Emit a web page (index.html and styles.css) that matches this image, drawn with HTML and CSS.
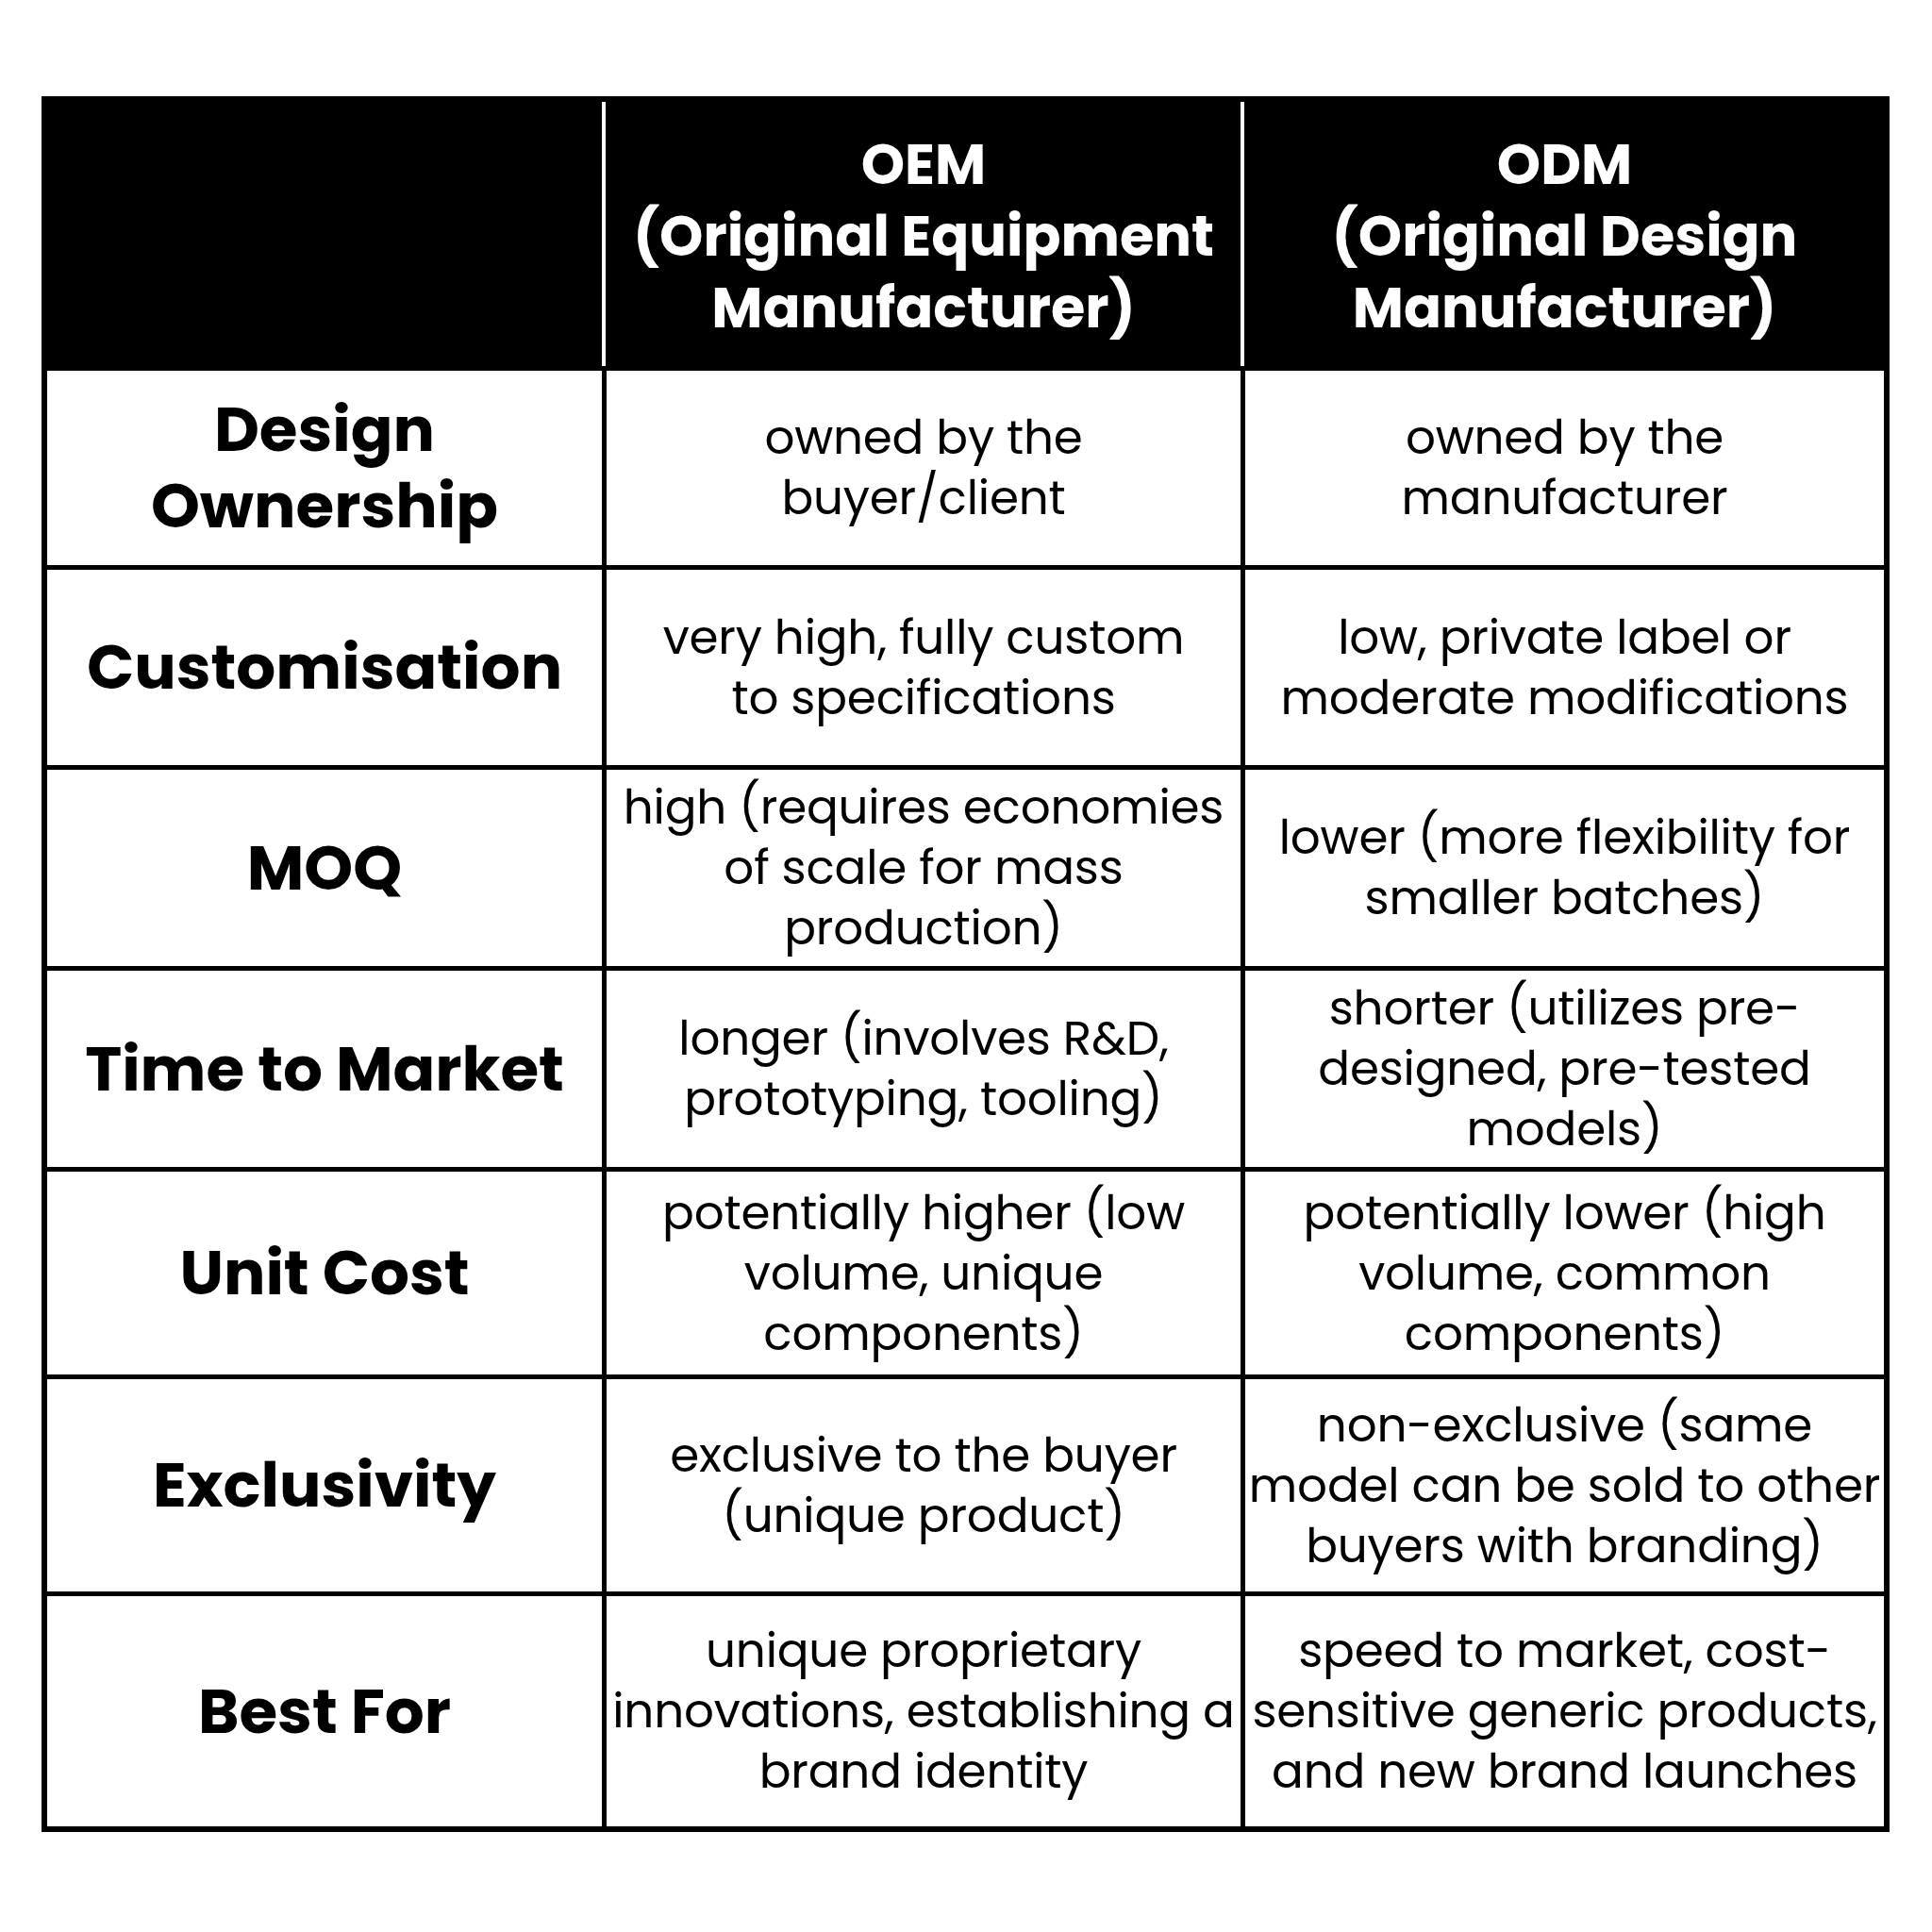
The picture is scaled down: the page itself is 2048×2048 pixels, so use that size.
FILE: index.html
```html
<!DOCTYPE html>
<html lang="en">
<head>
<meta charset="utf-8">
<title>OEM vs ODM</title>
<link rel="stylesheet" href="styles.css">
</head>
<body>
<main class="page">
  <div class="table">
    <div class="cell head corner"></div>
    <div class="cell head">OEM<br>(Original Equipment<br>Manufacturer)</div>
    <div class="cell head">ODM<br>(Original Design<br>Manufacturer)</div>

    <div class="cell label">Design<br>Ownership</div>
    <div class="cell">owned by the<br>buyer/client</div>
    <div class="cell">owned by the<br>manufacturer</div>

    <div class="cell label">Customisation</div>
    <div class="cell">very high, fully custom<br>to specifications</div>
    <div class="cell">low, private label or<br>moderate modifications</div>

    <div class="cell label">MOQ</div>
    <div class="cell">high (requires economies<br>of scale for mass<br>production)</div>
    <div class="cell">lower (more flexibility for<br>smaller batches)</div>

    <div class="cell label">Time to Market</div>
    <div class="cell">longer (involves R&amp;D,<br>prototyping, tooling)</div>
    <div class="cell">shorter (utilizes pre-<br>designed, pre-tested<br>models)</div>

    <div class="cell label">Unit Cost</div>
    <div class="cell">potentially higher (low<br>volume, unique<br>components)</div>
    <div class="cell">potentially lower (high<br>volume, common<br>components)</div>

    <div class="cell label">Exclusivity</div>
    <div class="cell">exclusive to the buyer<br>(unique product)</div>
    <div class="cell">non-exclusive (same<br>model can be sold to other<br>buyers with branding)</div>

    <div class="cell label">Best For</div>
    <div class="cell">unique proprietary<br>innovations, establishing a<br>brand identity</div>
    <div class="cell">speed to market, cost-<br>sensitive generic products,<br>and new brand launches</div>
  </div>
</main>
</body>
</html>
```

FILE: styles.css
```css
html, body {
  margin: 0;
  padding: 0;
  background: #ffffff;
}

.page {
  padding: 102px 0 0 44px;
}

.table {
  display: grid;
  grid-template-columns: 588px 672px 677px;
  grid-template-rows: 280px 206px 207px 208px 208px 215px 225px 244px;
  gap: 5px;
  padding: 6px;
  width: max-content;
  background: #000000;
  font-family: "Poppins", "Open Sans", "DejaVu Sans", sans-serif;
  color: #000000;
}

.cell {
  background: #ffffff;
  display: flex;
  align-items: center;
  justify-content: center;
  text-align: center;
  font-size: 50px;
  line-height: 64px;
  font-weight: 400;
  letter-spacing: -0.2px;
  white-space: nowrap;
}

.label {
  font-size: 66px;
  line-height: 81px;
  font-weight: 700;
  letter-spacing: 0;
}

.head {
  position: relative;
  background: #000000;
  color: #ffffff;
  font-size: 59px;
  line-height: 76px;
  font-weight: 700;
  letter-spacing: 0;
  padding-top: 6px;
}

.head + .head::before {
  content: "";
  position: absolute;
  left: -5px;
  top: 0;
  bottom: 0;
  width: 4px;
  background: #ffffff;
}
```
